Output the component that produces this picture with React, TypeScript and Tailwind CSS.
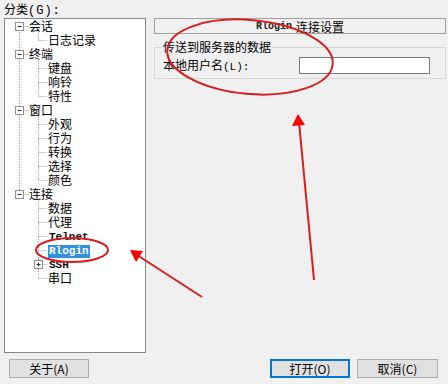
import React from "react";

type Row = {
  label: string;
  level: 0 | 1;
  box?: "minus" | "plus";
  lineA: "none" | "full" | "top" | "bottom";
  lineB: "none" | "full" | "top";
  mono?: boolean;
  selected?: boolean;
};

const rows: Row[] = [
  { label: "会话", level: 0, box: "minus", lineA: "bottom", lineB: "none" },
  { label: "日志记录", level: 1, lineA: "full", lineB: "top" },
  { label: "终端", level: 0, box: "minus", lineA: "full", lineB: "none" },
  { label: "键盘", level: 1, lineA: "full", lineB: "full" },
  { label: "响铃", level: 1, lineA: "full", lineB: "full" },
  { label: "特性", level: 1, lineA: "full", lineB: "top" },
  { label: "窗口", level: 0, box: "minus", lineA: "full", lineB: "none" },
  { label: "外观", level: 1, lineA: "full", lineB: "full" },
  { label: "行为", level: 1, lineA: "full", lineB: "full" },
  { label: "转换", level: 1, lineA: "full", lineB: "full" },
  { label: "选择", level: 1, lineA: "full", lineB: "full" },
  { label: "颜色", level: 1, lineA: "full", lineB: "top" },
  { label: "连接", level: 0, box: "minus", lineA: "top", lineB: "none" },
  { label: "数据", level: 1, lineA: "none", lineB: "full" },
  { label: "代理", level: 1, lineA: "none", lineB: "full" },
  { label: "Telnet", level: 1, lineA: "none", lineB: "full", mono: true },
  { label: "Rlogin", level: 1, lineA: "none", lineB: "full", mono: true, selected: true },
  { label: "SSH", level: 1, box: "plus", lineA: "none", lineB: "full", mono: true },
  { label: "串口", level: 1, lineA: "none", lineB: "top" },
];

const DOT = "#a0a0a0";

function Connector({ r }: { r: Row }) {
  const ax = 14.5;
  const bx = 33.5;
  const w = r.level === 0 ? 24 : 43;
  const vA =
    r.lineA === "full" ? [0, 14] : r.lineA === "top" ? [0, 7] : r.lineA === "bottom" ? [7, 14] : null;
  const vB = r.lineB === "full" ? [0, 14] : r.lineB === "top" ? [0, 7] : null;
  return (
    <svg width={w} height="14" className="shrink-0" viewBox={`0 0 ${w} 14`}>
      {vA && (
        <line x1={ax} y1={vA[0]} x2={ax} y2={vA[1]} stroke={DOT} strokeWidth="1" strokeDasharray="1 1" />
      )}
      {r.level === 0 && (
        <line x1={ax} y1={7.5} x2={24} y2={7.5} stroke={DOT} strokeWidth="1" strokeDasharray="1 1" />
      )}
      {r.level === 0 && r.box && (
        <g>
          <rect x={10.5} y={3.5} width={8} height={8} fill="#fff" stroke="#919191" />
          <line x1={12.5} y1={7.5} x2={16.5} y2={7.5} stroke="#333" />
        </g>
      )}
      {vB && r.level === 1 && (
        <line x1={bx} y1={vB[0]} x2={bx} y2={vB[1]} stroke={DOT} strokeWidth="1" strokeDasharray="1 1" />
      )}
      {r.level === 1 && (
        <line x1={bx} y1={7.5} x2={42} y2={7.5} stroke={DOT} strokeWidth="1" strokeDasharray="1 1" />
      )}
      {r.level === 1 && r.box && (
        <g>
          <rect x={29.5} y={3.5} width={8} height={8} fill="#fff" stroke="#919191" />
          <line x1={31.5} y1={7.5} x2={35.5} y2={7.5} stroke="#333" />
          <line x1={33.5} y1={5.5} x2={33.5} y2={9.5} stroke="#333" />
        </g>
      )}
    </svg>
  );
}

const cjk = "font-['SimSun','Noto_Sans_CJK_SC',sans-serif]";
const mono = "font-['Liberation_Mono',monospace]";

export default function App() {
  return (
    <div className={`relative w-[448px] h-[384px] bg-[#f0f0f0] overflow-hidden text-[12px] text-black ${cjk}`}>
      <div className="h-[18px] pl-[4px] pt-[1px] leading-[15px] text-[12px]">
        分类<span className={`${mono} tracking-[1px]`}>(G):</span>
      </div>
      <div className="flex h-[335px]">
        {/* tree */}
        <div className="ml-[4px] w-[142px] h-[335px] border border-[#828790] bg-white flex flex-col">
          {rows.map((r, i) => (
            <div key={i} className="flex h-[14px] items-center">
              <Connector r={r} />
              <span className="leading-[14px] whitespace-nowrap">
                {r.mono ? (
                  <span
                    className={`${mono} font-bold text-[11px] px-[1px] leading-[13px] inline-block ${
                      r.selected ? "bg-[#3390de] text-white" : "text-[#111]"
                    }`}
                  >
                    {r.label}
                  </span>
                ) : (
                  r.label
                )}
              </span>
            </div>
          ))}
        </div>
        {/* right panel */}
        <div className="ml-[8px] w-[292px] flex flex-col">
          <div className="h-[16px] border border-[#a0a0a0] flex items-center justify-center gap-[4px] leading-[14px] pt-[2px]">
            <span className={`${mono} font-bold text-[10px] text-[#222]`}>Rlogin</span>
            <span>连接设置</span>
          </div>
          <fieldset className="mt-[6px] border border-[#d5d5d5] rounded-none px-[8px] pt-[3px] pb-[4px] m-0 min-w-0">
            <legend className="px-[1px] ml-[-1px] leading-[14px] text-[12px]">传送到服务器的数据</legend>
            <div className="flex items-center h-[17px]">
              <span className="leading-[14px]">
                本地用户名<span className={`${mono} text-[11px]`}>(L):</span>
              </span>
              <div className="ml-auto mr-[7px] w-[131px] h-[17px] bg-white border border-[#7a7a7a]" />
            </div>
          </fieldset>
        </div>
      </div>
      {/* buttons */}
      <div className="flex mt-[6px] h-[19px]">
        <div className="ml-[9px] w-[80px] h-[19px] border border-[#adadad] bg-[#e1e1e1] flex items-center justify-center leading-[14px]">
          关于(A)
        </div>
        <div className="ml-[181px] w-[80px] h-[19px] border-2 border-[#0078d7] bg-[#e1e1e1] flex items-center justify-center leading-[14px]">
          打开(O)
        </div>
        <div className="ml-[7px] w-[81px] h-[19px] border border-[#adadad] bg-[#e1e1e1] flex items-center justify-center leading-[14px]">
          取消(C)
        </div>
      </div>

      {/* red annotations */}
      <svg className="absolute inset-0 pointer-events-none" width="448" height="384" viewBox="0 0 448 384">
        <ellipse cx="250" cy="57" rx="83" ry="37" transform="rotate(5 250 57)" fill="none" stroke="#d81e1e" strokeWidth="2" />
        <ellipse cx="72" cy="250" rx="36" ry="12" fill="none" stroke="#d81e1e" strokeWidth="2" />
        <line x1="202" y1="297" x2="137" y2="255" stroke="#d81e1e" strokeWidth="2" />
        <polygon points="130,250 143,251 136,262" fill="#f00" />
        <line x1="314" y1="280" x2="299" y2="122" stroke="#d81e1e" strokeWidth="2" />
        <polygon points="298,114 292,126 305,125" fill="#f00" />
      </svg>
    </div>
  );
}
